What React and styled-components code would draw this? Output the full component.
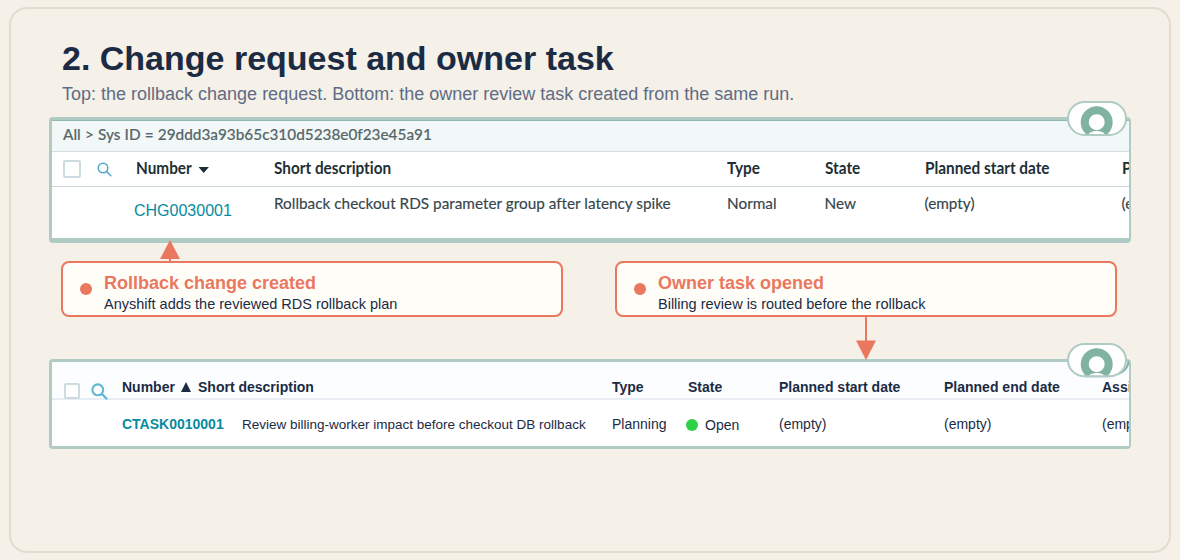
import React from 'react';
import styled, { createGlobalStyle } from 'styled-components';

const GlobalStyle = createGlobalStyle`
  * {
    box-sizing: border-box;
  }
  body {
    margin: 0;
    background: #f5f0e8;
    font-family: "Liberation Sans", Arial, sans-serif;
    font-variant-ligatures: none;
    color: #1b2b44;
  }
`;

const Page = styled.div`
  height: 560px;
  padding: 7px 9px;
  overflow: hidden;
`;

const Frame = styled.main`
  height: 546px;
  padding: 29px 38px 0;
  border: 2px solid #e4dccf;
  border-radius: 18px;
`;

const Heading = styled.header`
  height: 79px;
  padding-left: 13px;
`;

const Title = styled.h1`
  margin: 0;
  font-size: 34px;
  line-height: 40px;
  font-weight: 700;
`;

const Subtitle = styled.p`
  margin: 5px 0 0;
  font-size: 18px;
  line-height: 22px;
  color: #5e6c84;
`;

const Panel = styled.section`
  position: relative;
  height: ${p => p.height}px;
  border: 3px solid #afcbc3;
  border-right-width: 2px;
  border-bottom-width: ${p => p.bottom || 3}px;
  border-radius: 4px;
  background: #fff;
`;

const Clip = styled.div`
  height: 100%;
  overflow: hidden;
`;

const Row = styled.div`
  display: grid;
  grid-template-columns: ${p => p.columns};
  height: ${p => p.height}px;
  width: 1200px;
  align-items: start;
  white-space: nowrap;
  background: ${p => p.bg || '#fff'};
  border-bottom: ${p => p.line ? `${p.lineWidth || 1}px solid ${p.line}` : 'none'};
`;

const Breadcrumb = styled.div`
  height: 32px;
  padding: 4px 0 0 11px;
  border-top: 1px solid #8fb9ac;
  border-bottom: 1px solid #d3dfe2;
  background: #f2f8f8;
  font-family: Lato, sans-serif;
  font-size: 15.33px;
  line-height: 19px;
  font-weight: 500;
  word-spacing: 0.3px;
  color: #56676b;
  -webkit-text-stroke: 0.15px #56676b;
`;

const ChangeCell = styled.span`
  padding-top: 6px;
  font-family: Lato, sans-serif;
  font-size: 15.33px;
  line-height: 20px;
  color: #35454b;
  -webkit-text-stroke: 0.15px #35454b;
`;

const ChangeHead = styled.span`
  padding-top: 6px;
  font-family: Lato, sans-serif;
  font-size: 16.2px;
  line-height: 20px;
  font-weight: 700;
  color: #1d2f35;
  transform: scaleX(0.947);
  transform-origin: left;
`;

const ChangeLink = styled.a`
  padding-top: 14px;
  font-size: 16px;
  line-height: 20px;
  color: #078ba0;
`;

const TaskCell = styled.span`
  display: flex;
  padding-top: ${p => p.top}px;
  font-size: ${p => p.size || 14}px;
  line-height: 16px;
  font-weight: ${p => p.bold ? 700 : 400};
  color: ${p => p.link ? '#078ba0' : '#1b2b44'};
`;

const Checkbox = styled.span`
  width: ${p => p.size}px;
  height: ${p => p.size}px;
  margin-top: ${p => p.top}px;
  border: 2px solid #cddbe0;
  border-radius: 2px;
  background: #fff;
`;

const IconSlot = styled.span`
  display: flex;
  padding-top: ${p => p.top}px;
`;

const SortArrow = styled.svg`
  margin-left: ${p => p.gap}px;
  margin-top: ${p => p.drop || 0}px;
  vertical-align: ${p => p.lift || 0}px;
`;

const Status = styled.span`
  width: 12px;
  height: 12px;
  margin: 2px 7px 0 -2px;
  border-radius: 50%;
  background: #2ed145;
`;

const Badge = styled.svg`
  position: absolute;
  top: -20px;
  right: 0;
`;

const Callouts = styled.div`
  display: flex;
  justify-content: space-between;
  margin: 18px 14px 42px 12px;
`;

const Callout = styled.div`
  position: relative;
  display: flex;
  width: 502px;
  height: 56px;
  padding: 10px 0 0 17px;
  border: 2px solid #e9785f;
  border-radius: 8px;
  background: #fffdf8;
`;

const Dot = styled.span`
  width: 12px;
  height: 12px;
  margin: 10px 12px 0 0;
  border-radius: 50%;
  background: #e9785f;
`;

const CalloutTitle = styled.h2`
  margin: 0;
  font-size: 18px;
  line-height: 20px;
  color: #e9785f;
`;

const CalloutText = styled.p`
  margin: 2px 0 0;
  font-size: 14.5px;
  line-height: 18px;
`;

const Arrow = styled.svg`
  position: absolute;
  left: ${p => p.left}px;
  top: ${p => p.top}px;
  z-index: 2;
`;

const headColumns = '11px 34px 38.5px 138.5px 453px 97.5px 100px 197px 100px';
const changeColumns = '82px 140px 453px 97.5px 100px 197px 100px';
const taskHeadColumns = '12px 27px 31px 76px 414px 76px 91px 165px 158px 100px';
const taskColumns = '70px 120px 370px 76px 91px 165px 158px 100px';

const Search = ({ size, stroke, color }) => (
  <svg width={size} height={size} viewBox="0 0 16 16" fill="none" stroke={color} strokeWidth={stroke}>
    <circle cx="6.4" cy="6.4" r="5.1" />
    <path d="M10 10L15.2 15.2" />
  </svg>
);

const OwnerBadge = ({ height, clipId, trail }) => (
  <Badge width="62" height="38" viewBox="0 0 62 38">
    <defs>
      <clipPath id={clipId}>
        <rect x="2" y="2" width="58" height={height - 0.5} rx="16" />
      </clipPath>
    </defs>
    {trail && <path d="M51 32Q60 29 62 19" fill="none" stroke="#80b4a1" strokeWidth="2" />}
    <rect x="1" y="2" width="58" height={height} rx="16.5" fill="#fff" stroke="#afcbc3" strokeWidth="2" />
    <g clipPath={`url(#${clipId})`}>
      <circle cx="29.7" cy="22.2" r="12" fill="none" stroke="#80b4a1" strokeWidth="8" />
      <ellipse cx="29.7" cy="34.5" rx="8" ry="3.5" fill="#fff" />
    </g>
    <path d={`M17.5 ${height + 2}H43`} stroke="#afcbc3" strokeWidth="2" />
  </Badge>
);

const App = () => {
  return (
    <Page>
      <GlobalStyle />
      <Frame>
        <Heading>
          <Title>2. Change request and owner task</Title>
          <Subtitle>Top: the rollback change request. Bottom: the owner review task created from the same run.</Subtitle>
        </Heading>

        <Panel height={126} bottom={5}>
          <Clip>
            <Breadcrumb>All &gt; Sys ID = 29ddd3a93b65c310d5238e0f23e45a91</Breadcrumb>
            <Row columns={headColumns} height={35} line="#c9d8dc">
              <span />
              <Checkbox size={18} top={8} />
              <IconSlot top={10}><Search size={15} stroke={1.6} color="#4fa9c5" /></IconSlot>
              <ChangeHead>
                Number
                <SortArrow gap={7} lift={1} width="11" height="6" viewBox="0 0 11 6"><path d="M0 0H11L5.5 6Z" fill="#1d2f35" /></SortArrow>
              </ChangeHead>
              <ChangeHead>Short description</ChangeHead>
              <ChangeHead>Type</ChangeHead>
              <ChangeHead>State</ChangeHead>
              <ChangeHead>Planned start date</ChangeHead>
              <ChangeHead>Planned end date</ChangeHead>
            </Row>
            <Row columns={changeColumns} height={51}>
              <span />
              <ChangeLink>CHG0030001</ChangeLink>
              <ChangeCell>Rollback checkout RDS parameter group after latency spike</ChangeCell>
              <ChangeCell>Normal</ChangeCell>
              <ChangeCell>New</ChangeCell>
              <ChangeCell>(empty)</ChangeCell>
              <ChangeCell>(empty)</ChangeCell>
            </Row>
          </Clip>
          <OwnerBadge height={33} clipId="change-owner" />
        </Panel>

        <Callouts>
          <Callout>
            <Dot />
            <div>
              <CalloutTitle>Rollback change created</CalloutTitle>
              <CalloutText>Anyshift adds the reviewed RDS rollback plan</CalloutText>
            </div>
            <Arrow left={97} top={-23} width="20" height="22" viewBox="0 0 20 22" fill="#e9785f">
              <path d="M10 0L20 19H11V22H9V19H0Z" />
            </Arrow>
          </Callout>
          <Callout>
            <Dot />
            <div>
              <CalloutTitle>Owner task opened</CalloutTitle>
              <CalloutText>Billing review is routed before the rollback</CalloutText>
            </div>
            <Arrow left={239} top={53} width="20" height="44" viewBox="0 0 20 44" fill="#e9785f">
              <path d="M9 0H11V24.5H20L10 44L0 24.5H9Z" />
            </Arrow>
          </Callout>
        </Callouts>

        <Panel height={90}>
          <Clip>
            <Row columns={taskHeadColumns} height={38} bg="#fcfdfe" line="#e7edf2" lineWidth={2}>
              <span />
              <Checkbox size={16} top={21} />
              <IconSlot top={21}><Search size={17} stroke={2} color="#60b7d0" /></IconSlot>
              <TaskCell bold top={17}>
                Number
                <SortArrow gap={6} drop={3} width="10" height="10" viewBox="0 0 10 10">
                  <path d="M5 0L10 10H0Z" fill="#1b2b44" />
                </SortArrow>
              </TaskCell>
              <TaskCell bold top={17}>Short description</TaskCell>
              <TaskCell bold top={17}>Type</TaskCell>
              <TaskCell bold top={17}>State</TaskCell>
              <TaskCell bold top={17}>Planned start date</TaskCell>
              <TaskCell bold top={17}>Planned end date</TaskCell>
              <TaskCell bold top={17}>Assigned to</TaskCell>
            </Row>
            <Row columns={taskColumns} height={46}>
              <span />
              <TaskCell as="a" bold link top={16}>CTASK0010001</TaskCell>
              <TaskCell top={17} size={13.5}>Review billing-worker impact before checkout DB rollback</TaskCell>
              <TaskCell top={16}>Planning</TaskCell>
              <TaskCell top={17}><Status />Open</TaskCell>
              <TaskCell top={16}>(empty)</TaskCell>
              <TaskCell top={16}>(empty)</TaskCell>
              <TaskCell top={16}>(empty)</TaskCell>
            </Row>
          </Clip>
          <OwnerBadge height={32.3} clipId="task-owner" trail />
        </Panel>
      </Frame>
    </Page>
  );
};

export default App;
